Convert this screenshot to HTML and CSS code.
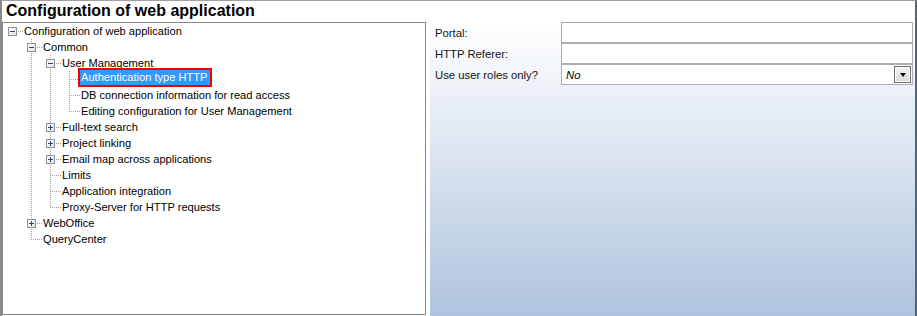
FILE: index.html
```html
<!DOCTYPE html>
<html>
<head>
<meta charset="utf-8">
<link rel="stylesheet" href="styles.css">
</head>
<body>
<div class="window">
  <div class="titlebar">Configuration of web application</div>
  <div class="main">
    <div class="tree">
      <svg class="tree-lines" width="422" height="291" viewBox="0 0 422 291">
        <g class="dots" stroke="#a0a0a0" stroke-width="1" stroke-dasharray="1 1" fill="none" shape-rendering="crispEdges">
          <line x1="28.5" y1="16" x2="28.5" y2="217"/>
          <line x1="47.5" y1="32" x2="47.5" y2="185"/>
          <line x1="66.5" y1="48" x2="66.5" y2="89"/>
          <line x1="9" y1="8.5" x2="20" y2="8.5"/>
          <line x1="28" y1="24.5" x2="39" y2="24.5"/>
          <line x1="47" y1="40.5" x2="58" y2="40.5"/>
          <line x1="66" y1="56.5" x2="77" y2="56.5"/>
          <line x1="66" y1="72.5" x2="77" y2="72.5"/>
          <line x1="66" y1="88.5" x2="77" y2="88.5"/>
          <line x1="47" y1="104.5" x2="58" y2="104.5"/>
          <line x1="47" y1="120.5" x2="58" y2="120.5"/>
          <line x1="47" y1="136.5" x2="58" y2="136.5"/>
          <line x1="47" y1="152.5" x2="58" y2="152.5"/>
          <line x1="47" y1="168.5" x2="58" y2="168.5"/>
          <line x1="47" y1="184.5" x2="58" y2="184.5"/>
          <line x1="28" y1="200.5" x2="39" y2="200.5"/>
          <line x1="28" y1="216.5" x2="39" y2="216.5"/>
        </g>
        <defs>
          <linearGradient id="bx" x1="0" y1="0" x2="1" y2="1">
            <stop offset="0" stop-color="#ffffff"/>
            <stop offset="1" stop-color="#e2e2e2"/>
          </linearGradient>
        </defs>
        <g shape-rendering="crispEdges">
          <rect x="5.5" y="4.5" width="8" height="8" fill="url(#bx)" stroke="#929292"/>
          <line x1="7" y1="8.5" x2="12" y2="8.5" stroke="#2c4574"/>

          <rect x="24.5" y="20.5" width="8" height="8" fill="url(#bx)" stroke="#929292"/>
          <line x1="26" y1="24.5" x2="31" y2="24.5" stroke="#2c4574"/>

          <rect x="43.5" y="36.5" width="8" height="8" fill="url(#bx)" stroke="#929292"/>
          <line x1="45" y1="40.5" x2="50" y2="40.5" stroke="#2c4574"/>

          <rect x="43.5" y="100.5" width="8" height="8" fill="url(#bx)" stroke="#929292"/>
          <line x1="45" y1="104.5" x2="50" y2="104.5" stroke="#2c4574"/>
          <line x1="47.5" y1="102" x2="47.5" y2="107" stroke="#2c4574"/>

          <rect x="43.5" y="116.5" width="8" height="8" fill="url(#bx)" stroke="#929292"/>
          <line x1="45" y1="120.5" x2="50" y2="120.5" stroke="#2c4574"/>
          <line x1="47.5" y1="118" x2="47.5" y2="123" stroke="#2c4574"/>

          <rect x="43.5" y="132.5" width="8" height="8" fill="url(#bx)" stroke="#929292"/>
          <line x1="45" y1="136.5" x2="50" y2="136.5" stroke="#2c4574"/>
          <line x1="47.5" y1="134" x2="47.5" y2="139" stroke="#2c4574"/>

          <rect x="24.5" y="196.5" width="8" height="8" fill="url(#bx)" stroke="#929292"/>
          <line x1="26" y1="200.5" x2="31" y2="200.5" stroke="#2c4574"/>
          <line x1="28.5" y1="198" x2="28.5" y2="203" stroke="#2c4574"/>
        </g>
      </svg>
      <div class="row l0"><span class="label">Configuration of web application</span></div>
      <div class="row l1"><span class="label">Common</span></div>
      <div class="row l2"><span class="label">User Management</span></div>
      <div class="row l3"><span class="label selected">Authentication type HTTP</span></div>
      <div class="row l3"><span class="label">DB connection information for read access</span></div>
      <div class="row l3"><span class="label">Editing configuration for User Management</span></div>
      <div class="row l2"><span class="label">Full-text search</span></div>
      <div class="row l2"><span class="label">Project linking</span></div>
      <div class="row l2"><span class="label">Email map across applications</span></div>
      <div class="row l2"><span class="label">Limits</span></div>
      <div class="row l2"><span class="label">Application integration</span></div>
      <div class="row l2"><span class="label">Proxy-Server for HTTP requests</span></div>
      <div class="row l1"><span class="label">WebOffice</span></div>
      <div class="row l1"><span class="label">QueryCenter</span></div>
    </div>
    <div class="props">
      <div class="form">
        <div class="prop-label">Portal:</div>
        <div class="field"></div>
        <div class="prop-label">HTTP Referer:</div>
        <div class="field"></div>
        <div class="prop-label">Use user roles only?</div>
        <div class="field combo">
          <span class="combo-value">No</span>
          <span class="combo-button"><span class="arrow"></span></span>
        </div>
      </div>
    </div>
  </div>
</div>
</body>
</html>
```

FILE: styles.css
```css
html, body {
  margin: 0;
  padding: 0;
}
body {
  width: 917px;
  height: 316px;
  overflow: hidden;
  background: #ffffff;
  font-family: "Liberation Sans", Arial, sans-serif;
  color: #000000;
}
.window {
  box-sizing: border-box;
  width: 917px;
  height: 316px;
  border-top: 1px solid #a0a0a0;
  border-left: 2px solid #8a8a8a;
  border-right: 2px solid #52647a;
  background: #ffffff;
  display: flex;
  flex-direction: column;
}
.titlebar {
  height: 21px;
  line-height: 20px;
  padding-left: 4px;
  font-size: 16px;
  font-weight: bold;
  white-space: nowrap;
}
.main {
  flex: 1;
  display: flex;
  gap: 4px;
}
.tree {
  position: relative;
  box-sizing: border-box;
  width: 424px;
  height: 293px;
  border: 1px solid #828790;
  background: #ffffff;
  font-size: 11.1px;
  flex: none;
}
.tree-lines {
  position: absolute;
  left: 0;
  top: 0;
}
.row {
  position: relative;
  height: 16px;
  display: flex;
  align-items: center;
  white-space: nowrap;
}
.row.l0 { padding-left: 21px; }
.row.l1 { padding-left: 40px; }
.row.l2 { padding-left: 59px; }
.row.l3 { padding-left: 78px; }
.label {
  line-height: 16px;
}
.label.selected {
  align-self: flex-start;
  margin-top: -3px;
  margin-left: -3px;
  line-height: 15px;
  padding: 0 3px 0 1px;
  border: 2px solid #f00000;
  background: #3399ff;
  color: #ffffff;
}
.props {
  flex: 1;
  background: linear-gradient(#ffffff, #afc3de);
}
.form {
  display: grid;
  grid-template-columns: 131px 352px;
  grid-auto-rows: 21px;
}
.prop-label {
  display: flex;
  align-items: center;
  padding-left: 5px;
  font-size: 11.3px;
  color: #141414;
  white-space: nowrap;
}
.field {
  box-sizing: border-box;
  border: 1px solid #abadb3;
  background: #ffffff;
  display: flex;
  align-items: center;
}
.combo {
  justify-content: space-between;
  padding-right: 1px;
}
.combo-value {
  padding-left: 4px;
  font-size: 11.3px;
  font-style: italic;
}
.combo-button {
  box-sizing: border-box;
  width: 17px;
  height: 17px;
  border: 1px solid #6f6f6f;
  background: linear-gradient(#f4f4f4, #d9d9d9);
  box-shadow: inset 0 0 0 1px #fbfbfb;
  display: flex;
  align-items: center;
  justify-content: center;
}
.arrow {
  width: 0;
  height: 0;
  border-left: 3.5px solid transparent;
  border-right: 3.5px solid transparent;
  border-top: 4px solid #000000;
  margin-top: 1px;
}
```
